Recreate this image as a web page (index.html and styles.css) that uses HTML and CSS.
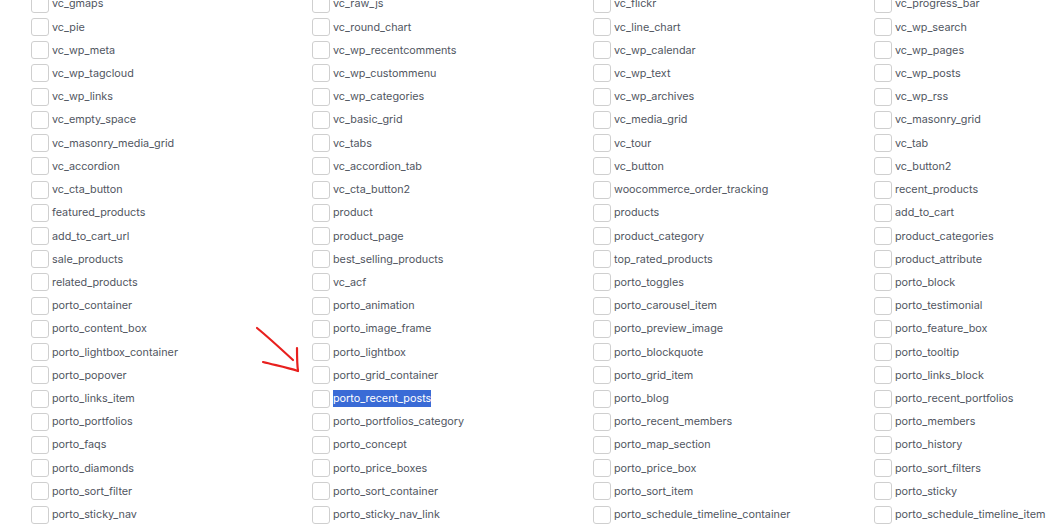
FILE: index.html
```html
<!DOCTYPE html>
<html>
<head>
<meta charset="utf-8">
<link rel="stylesheet" href="styles.css">
</head>
<body>
<div class="page">
  <ul class="list">
    <li class="item"><span class="box"></span><span class="label">vc_gmaps</span></li>
    <li class="item"><span class="box"></span><span class="label">vc_raw_js</span></li>
    <li class="item"><span class="box"></span><span class="label">vc_flickr</span></li>
    <li class="item"><span class="box"></span><span class="label">vc_progress_bar</span></li>
    <li class="item"><span class="box"></span><span class="label">vc_pie</span></li>
    <li class="item"><span class="box"></span><span class="label">vc_round_chart</span></li>
    <li class="item"><span class="box"></span><span class="label">vc_line_chart</span></li>
    <li class="item"><span class="box"></span><span class="label">vc_wp_search</span></li>
    <li class="item"><span class="box"></span><span class="label">vc_wp_meta</span></li>
    <li class="item"><span class="box"></span><span class="label">vc_wp_recentcomments</span></li>
    <li class="item"><span class="box"></span><span class="label">vc_wp_calendar</span></li>
    <li class="item"><span class="box"></span><span class="label">vc_wp_pages</span></li>
    <li class="item"><span class="box"></span><span class="label">vc_wp_tagcloud</span></li>
    <li class="item"><span class="box"></span><span class="label">vc_wp_custommenu</span></li>
    <li class="item"><span class="box"></span><span class="label">vc_wp_text</span></li>
    <li class="item"><span class="box"></span><span class="label">vc_wp_posts</span></li>
    <li class="item"><span class="box"></span><span class="label">vc_wp_links</span></li>
    <li class="item"><span class="box"></span><span class="label">vc_wp_categories</span></li>
    <li class="item"><span class="box"></span><span class="label">vc_wp_archives</span></li>
    <li class="item"><span class="box"></span><span class="label">vc_wp_rss</span></li>
    <li class="item"><span class="box"></span><span class="label">vc_empty_space</span></li>
    <li class="item"><span class="box"></span><span class="label">vc_basic_grid</span></li>
    <li class="item"><span class="box"></span><span class="label">vc_media_grid</span></li>
    <li class="item"><span class="box"></span><span class="label">vc_masonry_grid</span></li>
    <li class="item"><span class="box"></span><span class="label">vc_masonry_media_grid</span></li>
    <li class="item"><span class="box"></span><span class="label">vc_tabs</span></li>
    <li class="item"><span class="box"></span><span class="label">vc_tour</span></li>
    <li class="item"><span class="box"></span><span class="label">vc_tab</span></li>
    <li class="item"><span class="box"></span><span class="label">vc_accordion</span></li>
    <li class="item"><span class="box"></span><span class="label">vc_accordion_tab</span></li>
    <li class="item"><span class="box"></span><span class="label">vc_button</span></li>
    <li class="item"><span class="box"></span><span class="label">vc_button2</span></li>
    <li class="item"><span class="box"></span><span class="label">vc_cta_button</span></li>
    <li class="item"><span class="box"></span><span class="label">vc_cta_button2</span></li>
    <li class="item"><span class="box"></span><span class="label">woocommerce_order_tracking</span></li>
    <li class="item"><span class="box"></span><span class="label">recent_products</span></li>
    <li class="item"><span class="box"></span><span class="label">featured_products</span></li>
    <li class="item"><span class="box"></span><span class="label">product</span></li>
    <li class="item"><span class="box"></span><span class="label">products</span></li>
    <li class="item"><span class="box"></span><span class="label">add_to_cart</span></li>
    <li class="item"><span class="box"></span><span class="label">add_to_cart_url</span></li>
    <li class="item"><span class="box"></span><span class="label">product_page</span></li>
    <li class="item"><span class="box"></span><span class="label">product_category</span></li>
    <li class="item"><span class="box"></span><span class="label">product_categories</span></li>
    <li class="item"><span class="box"></span><span class="label">sale_products</span></li>
    <li class="item"><span class="box"></span><span class="label">best_selling_products</span></li>
    <li class="item"><span class="box"></span><span class="label">top_rated_products</span></li>
    <li class="item"><span class="box"></span><span class="label">product_attribute</span></li>
    <li class="item"><span class="box"></span><span class="label">related_products</span></li>
    <li class="item"><span class="box"></span><span class="label">vc_acf</span></li>
    <li class="item"><span class="box"></span><span class="label">porto_toggles</span></li>
    <li class="item"><span class="box"></span><span class="label">porto_block</span></li>
    <li class="item"><span class="box"></span><span class="label">porto_container</span></li>
    <li class="item"><span class="box"></span><span class="label">porto_animation</span></li>
    <li class="item"><span class="box"></span><span class="label">porto_carousel_item</span></li>
    <li class="item"><span class="box"></span><span class="label">porto_testimonial</span></li>
    <li class="item"><span class="box"></span><span class="label">porto_content_box</span></li>
    <li class="item"><span class="box"></span><span class="label">porto_image_frame</span></li>
    <li class="item"><span class="box"></span><span class="label">porto_preview_image</span></li>
    <li class="item"><span class="box"></span><span class="label">porto_feature_box</span></li>
    <li class="item"><span class="box"></span><span class="label">porto_lightbox_container</span></li>
    <li class="item"><span class="box"></span><span class="label">porto_lightbox</span></li>
    <li class="item"><span class="box"></span><span class="label">porto_blockquote</span></li>
    <li class="item"><span class="box"></span><span class="label">porto_tooltip</span></li>
    <li class="item"><span class="box"></span><span class="label">porto_popover</span></li>
    <li class="item"><span class="box"></span><span class="label">porto_grid_container</span></li>
    <li class="item"><span class="box"></span><span class="label">porto_grid_item</span></li>
    <li class="item"><span class="box"></span><span class="label">porto_links_block</span></li>
    <li class="item"><span class="box"></span><span class="label">porto_links_item</span></li>
    <li class="item"><span class="box"></span><span class="label selected">porto_recent_posts</span></li>
    <li class="item"><span class="box"></span><span class="label">porto_blog</span></li>
    <li class="item"><span class="box"></span><span class="label">porto_recent_portfolios</span></li>
    <li class="item"><span class="box"></span><span class="label">porto_portfolios</span></li>
    <li class="item"><span class="box"></span><span class="label">porto_portfolios_category</span></li>
    <li class="item"><span class="box"></span><span class="label">porto_recent_members</span></li>
    <li class="item"><span class="box"></span><span class="label">porto_members</span></li>
    <li class="item"><span class="box"></span><span class="label">porto_faqs</span></li>
    <li class="item"><span class="box"></span><span class="label">porto_concept</span></li>
    <li class="item"><span class="box"></span><span class="label">porto_map_section</span></li>
    <li class="item"><span class="box"></span><span class="label">porto_history</span></li>
    <li class="item"><span class="box"></span><span class="label">porto_diamonds</span></li>
    <li class="item"><span class="box"></span><span class="label">porto_price_boxes</span></li>
    <li class="item"><span class="box"></span><span class="label">porto_price_box</span></li>
    <li class="item"><span class="box"></span><span class="label">porto_sort_filters</span></li>
    <li class="item"><span class="box"></span><span class="label">porto_sort_filter</span></li>
    <li class="item"><span class="box"></span><span class="label">porto_sort_container</span></li>
    <li class="item"><span class="box"></span><span class="label">porto_sort_item</span></li>
    <li class="item"><span class="box"></span><span class="label">porto_sticky</span></li>
    <li class="item"><span class="box"></span><span class="label">porto_sticky_nav</span></li>
    <li class="item"><span class="box"></span><span class="label">porto_sticky_nav_link</span></li>
    <li class="item"><span class="box"></span><span class="label">porto_schedule_timeline_container</span></li>
    <li class="item"><span class="box"></span><span class="label">porto_schedule_timeline_item</span></li>
  </ul>
  <svg class="arrow" width="60" height="60" viewBox="0 0 60 60">
    <path d="M7 8 C 18 17, 30 28, 43 40" />
    <path d="M13 42 C 24 45, 36 47, 48 51" />
    <path d="M47 28 C 47 36, 47 44, 48 51" />
  </svg>
</div>
</body>
</html>
```
FILE: styles.css
```css
html, body {
  margin: 0;
  padding: 0;
  background: #ffffff;
  overflow: hidden;
}
.page {
  position: relative;
  width: 1051px;
  height: 528px;
  overflow: hidden;
}
.list {
  list-style: none;
  margin: -7.8px 0 0 0;
  padding: 0 0 0 31px;
  display: grid;
  grid-template-columns: repeat(4, 281px);
  grid-auto-rows: 23.23px;
  font-family: Inter, "Liberation Sans", sans-serif;
  font-size: 10.8px;
  color: #51565f;
}
.item {
  display: flex;
  align-items: center;
  gap: 3px;
  white-space: nowrap;
}
.box {
  flex: none;
  width: 16px;
  height: 16px;
  border: 1px solid #cfcfcf;
  border-radius: 3px;
  background: #fff;
}
.label {
  line-height: 17px;
}
.selected {
  background: #3a6bd6;
  color: #ffffff;
}
.arrow {
  position: absolute;
  left: 250px;
  top: 320px;
  fill: none;
  stroke: #e8201e;
  stroke-width: 2.2;
  stroke-linecap: round;
}
```
